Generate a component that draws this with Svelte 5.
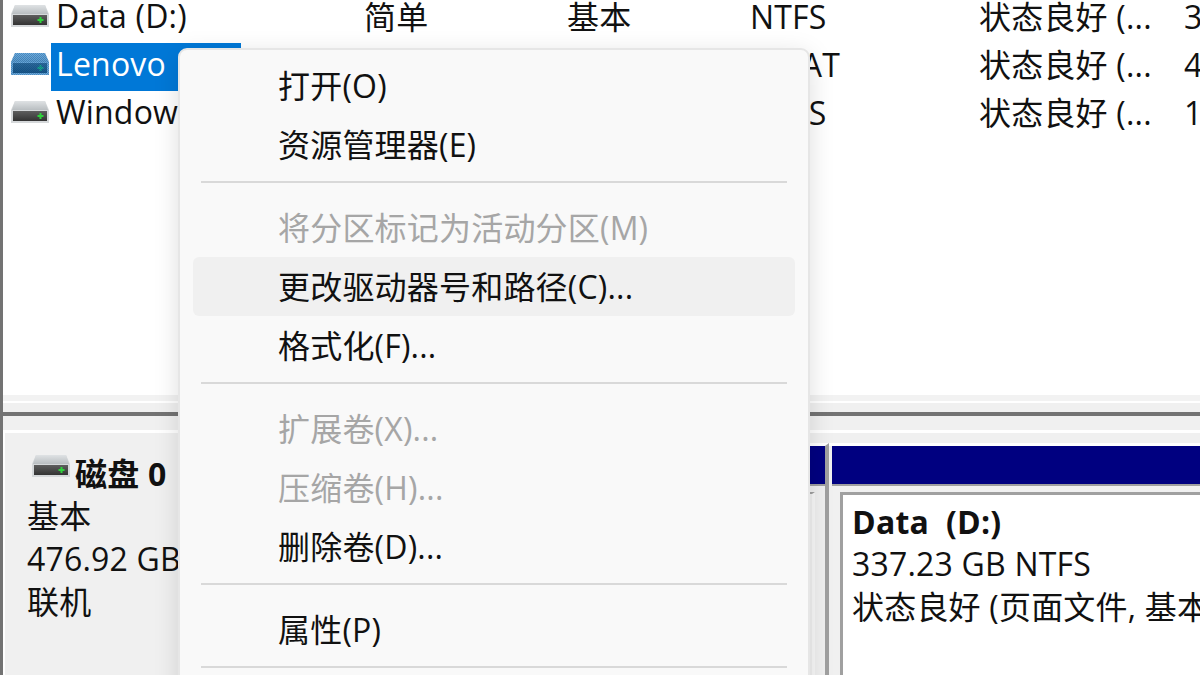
<script>
  const rows = [
    { name: 'Data (D:)', layout: '简单', type: '基本', fs: 'NTFS', status: '状态良好 (...', size: '3' },
    { name: 'Lenovo', layout: '简单', type: '基本', fs: 'exFAT', status: '状态良好 (...', size: '4', selected: true },
    { name: 'Windows', layout: '简单', type: '基本', fs: 'NTFS', status: '状态良好 (...', size: '1' }
  ];
  const menu = [
    [{ t: '打开(O)' }, { t: '资源管理器(E)' }],
    [{ t: '将分区标记为活动分区(M)', off: true }, { t: '更改驱动器号和路径(C)...', hover: true }, { t: '格式化(F)...' }],
    [{ t: '扩展卷(X)...', off: true }, { t: '压缩卷(H)...', off: true }, { t: '删除卷(D)...' }],
    [{ t: '属性(P)' }]
  ];
</script>

{#snippet drive(selected)}
  <svg class="drive" viewBox="0 0 38 22" aria-hidden="true">
    <defs>
      <linearGradient id="body" x1="0" y1="0" x2="0" y2="1">
        <stop offset="0" stop-color="#dfe2e4" /><stop offset="1" stop-color="#b9bec1" />
      </linearGradient>
      <linearGradient id="bar" x1="0" y1="0" x2="0" y2="1">
        <stop offset="0" stop-color="#5e5e5e" /><stop offset="1" stop-color="#333" />
      </linearGradient>
      <pattern id="dither" width="2" height="2" patternUnits="userSpaceOnUse">
        <rect width="1" height="1" fill="#003c78" fill-opacity="0.3" /><rect x="1" y="1" width="1" height="1" fill="#003c78" fill-opacity="0.3" />
      </pattern>
    </defs>
    <path d="M4 0H34L38 9V22H0V9Z" fill="#d5d8da" />
    <path d="M4 0H34L37 9H1Z" fill="url(#body)" />
    <rect x="2" y="10" width="34" height="10" fill="url(#bar)" />
    <rect x="26.5" y="14" width="6" height="2" fill="#2fd13c" />
    <rect x="28.5" y="12" width="2" height="6" fill="#2fd13c" />
    {#if selected}
      <path d="M4 0H34L38 9V22H0V9Z" fill="#0078d7" opacity="0.5" />
      <path d="M4 0H34L38 9V22H0V9Z" fill="url(#dither)" />
    {/if}
  </svg>
{/snippet}

<div class="window">
  <section class="volumes">
    {#each rows as r}
      <div class="row">
        {@render drive(r.selected)}
        <div class="name" class:selected={r.selected}>{r.name}</div>
        <div>{r.layout}</div>
        <div>{r.type}</div>
        <div>{r.fs}</div>
        <div>{r.status}</div>
        <div>{r.size}</div>
      </div>
    {/each}
  </section>

  <div class="scrolltrack"></div>
  <div class="splitter"></div>
  <div class="gutter"></div>

  <section class="disk">
    <div class="info">
      <div class="title">{@render drive(false)}<b>磁盘 0</b></div>
      <div>基本</div>
      <div>476.92 GB</div>
      <div>联机</div>
    </div>
    <div class="part first"><div class="bar"></div><div class="stub"></div></div>
    <div class="part second">
      <div class="bar"></div>
      <div class="box">
        <b>Data&nbsp; (D:)</b>
        <div>337.23 GB NTFS</div>
        <div>状态良好 (页面文件, 基本数据分区)</div>
      </div>
    </div>
  </section>

  <nav class="menu">
    {#each menu as group, i}
      {#if i}<hr />{/if}
      {#each group as item}
        <div class="item" class:off={item.off} class:hover={item.hover}>{item.t}</div>
      {/each}
    {/each}
    <hr />
  </nav>
</div>

<style>
  :global(body) { margin: 0; }
  .window {
    position: relative;
    box-sizing: border-box;
    width: 1200px;
    height: 675px;
    overflow: hidden;
    display: flex;
    flex-direction: column;
    border-left: 3px solid #737373;
    background: #fff;
    font: 32px/1 "Open Sans", "Noto Sans CJK SC", sans-serif;
    letter-spacing: 0.2px;
    color: #111;
  }
  .volumes {
    height: 395px;
    flex: none;
    padding: 0 0 0 8px;
    overflow: hidden;
  }
  .row {
    display: grid;
    grid-template-columns: 40px 313px 203px 183px 229px 205px 30px;
    align-items: start;
    height: 48px;
    line-height: 44px;
    white-space: nowrap;
    position: relative;
    top: -5px;
  }
  .drive { width: 38px; height: 22px; display: block; margin-top: 10px; }
  .name { padding-left: 5px; height: 48px; line-height: 42px; width: 185px; }
  .selected { background: #0078d7; color: #fff; }
  .scrolltrack {
    height: 17px;
    flex: none;
    box-sizing: border-box;
    background: #f0f0f0;
    border-top: 6px solid #f2f2f2;
    box-shadow: inset 0 8px 0 -6px #fff;
  }
  .splitter { height: 4px; flex: none; background: #737373; }
  .gutter {
    height: 17px;
    flex: none;
    box-sizing: border-box;
    background: #f0f0f0;
    border-bottom: 3px solid #fff;
  }
  .disk {
    flex: 1;
    display: flex;
    background: #f0f0f0;
    margin-left: 2px;
    padding-top: 10px;
    min-height: 0;
  }
  .info {
    width: 200px;
    flex: none;
    padding: 11px 0 0 22px;
    box-sizing: border-box;
    line-height: 43px;
    white-space: nowrap;
  }
  .title { display: flex; align-items: flex-start; height: 40px; margin-left: 5px; }
  .title .drive { margin-top: 1px; }
  .title b { line-height: 39px; margin-left: 5px; }
  .part { box-sizing: border-box; border-top: 3px solid #fff; }
  .first { width: 624px; flex: none; border-right: 4px solid #a0a0a0; }
  .second { flex: 1; min-width: 0; padding-left: 3px; }
  .bar { height: 38px; background: #000080; box-shadow: 0 2px 0 #a0a0a0; }
  .stub {
    margin: 8px 10px 0 0;
    height: 200px;
    box-sizing: border-box;
    border-top: 2px solid #a0a0a0;
    border-right: 3px solid #f8f8f8;
  }
  .box {
    margin: 8px 0 0 8px;
    height: 200px;
    box-sizing: border-box;
    border: solid #a0a0a0;
    border-width: 3px 0 0 3px;
    background: #fff;
    padding: 6px 0 0 9px;
    line-height: 42.5px;
    white-space: nowrap;
  }
  .box b { display: block; line-height: 42px; }
  .menu {
    position: absolute;
    left: 175px;
    top: 48px;
    width: 632px;
    height: 680px;
    box-sizing: border-box;
    padding: 6px 13px 0;
    background: #f9f9f9;
    border: 2px solid #e6e6e6;
    border-radius: 9px;
    box-shadow: 0 6px 26px rgba(0, 0, 0, 0.13);
  }
  .item {
    height: 59px;
    line-height: 59px;
    padding-left: 85px;
    border-radius: 6px;
    white-space: nowrap;
  }
  .off { color: #a6a6a6; }
  .hover { background: #f0f0f0; }
  hr {
    border: 0;
    height: 2px;
    background: #d9d9d9;
    margin: 7px 8px 15px;
  }
</style>
